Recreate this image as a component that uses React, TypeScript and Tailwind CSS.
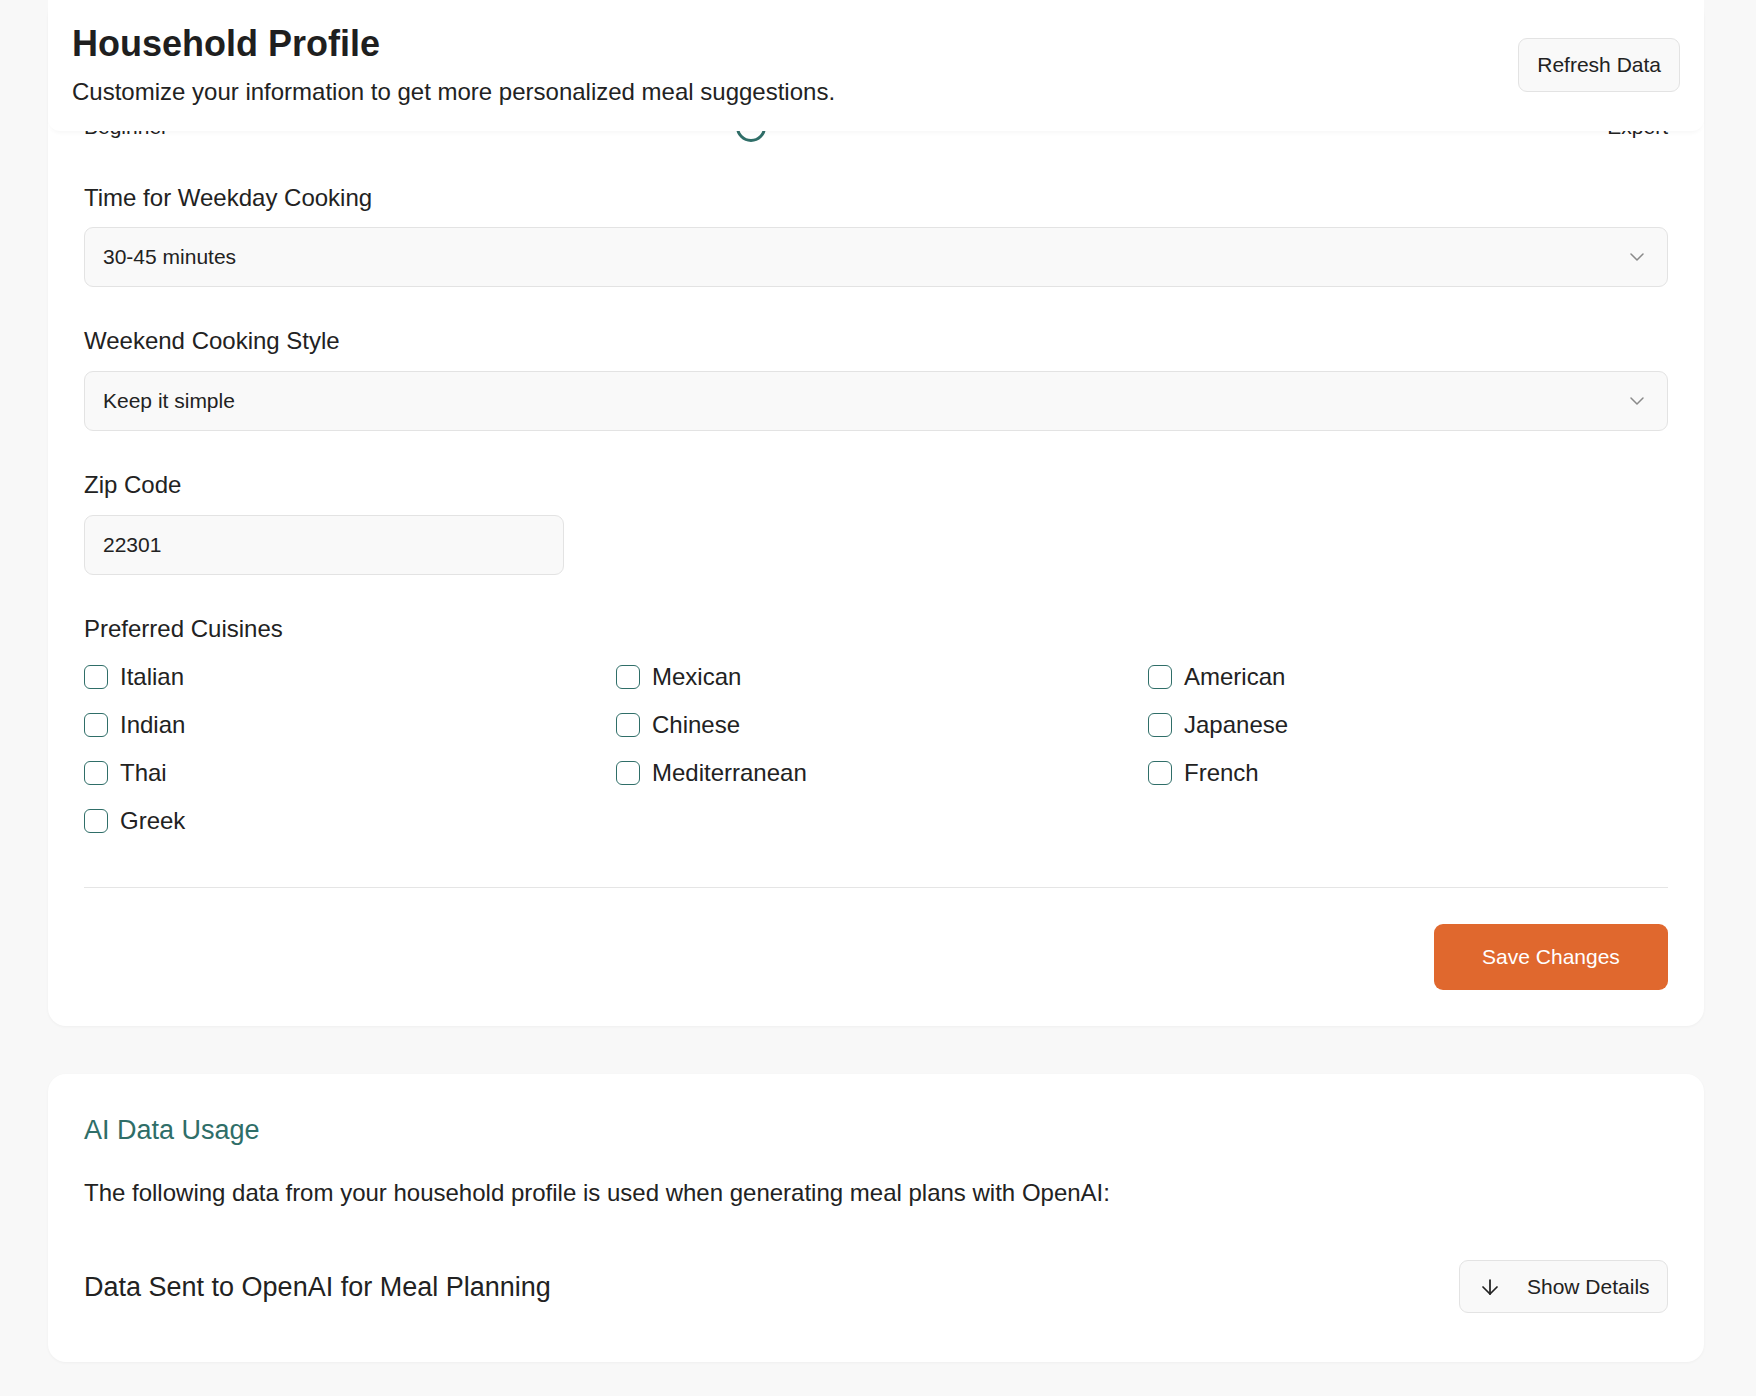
import React from "react";
import { ChevronDown, ArrowDown } from "lucide-react";

const cuisines = [
  "Italian",
  "Mexican",
  "American",
  "Indian",
  "Chinese",
  "Japanese",
  "Thai",
  "Mediterranean",
  "French",
  "Greek",
];

function Select({ value }: { value: string }) {
  return (
    <div className="flex h-[60px] w-full items-center justify-between rounded-[9px] border border-[#e3e3e3] bg-[#f9f9f9] px-[18px]">
      <span className="text-[21px] leading-[32px] text-[#222]">{value}</span>
      <ChevronDown size={24} strokeWidth={1.5} className="text-[#8a8a8a]" />
    </div>
  );
}

function Label({ children }: { children: React.ReactNode }) {
  return <div className="text-[24px] leading-[36px] text-[#222]">{children}</div>;
}

export default function App() {
  return (
    <div className="relative min-h-[1396px] w-full bg-[#f8f8f8] font-['Liberation_Sans',Arial,sans-serif] text-[#222]">
      {/* Sticky header overlay */}
      <div className="absolute left-[48px] top-0 z-10 flex h-[131px] w-[1656px] items-start justify-between rounded-b-[12px] bg-white px-[24px] pt-[24px] shadow-[0_4px_4px_-2px_rgba(0,0,0,0.035)]">
        <div>
          <h1 className="text-[36px] font-bold leading-[40px] text-[#1f1f1f]">Household Profile</h1>
          <p className="mt-[10px] text-[24px] leading-[36px] text-[#222]">
            Customize your information to get more personalized meal suggestions.
          </p>
        </div>
        <button className="mt-[14px] flex h-[54px] items-center rounded-[9px] border border-[#e3e3e3] bg-[#f9f9f9] px-[18px] text-[21px] text-[#222]">
          Refresh Data
        </button>
      </div>

      <div className="ml-[48px] w-[1656px] pb-[34px]">
        {/* Main profile card */}
        <div className="rounded-[18px] bg-white px-[36px] pb-[36px] pt-[112px] shadow-[0_1px_3px_rgba(0,0,0,0.04)]">
          {/* Skill slider row (mostly hidden below header) */}
          <div className="flex h-[30px] items-center gap-[24px]">
            <span className="text-[21px] leading-[30px] text-[#222]">Beginner</span>
            <div className="relative h-[6px] flex-1">
              <div
                className="absolute top-1/2 h-[30px] w-[30px] -translate-y-1/2 rounded-full border-[3px] border-[#2f6e68] bg-white"
                style={{ left: "calc(40.2% - 15px)" }}
              />
            </div>
            <span className="text-[21px] leading-[30px] text-[#222]">Expert</span>
          </div>

          <div className="mt-[38px]">
            <Label>Time for Weekday Cooking</Label>
            <div className="mt-[11px]">
              <Select value="30-45 minutes" />
            </div>
          </div>

          <div className="mt-[36px]">
            <Label>Weekend Cooking Style</Label>
            <div className="mt-[12px]">
              <Select value="Keep it simple" />
            </div>
          </div>

          <div className="mt-[36px]">
            <Label>Zip Code</Label>
            <div className="mt-[12px] flex h-[60px] w-[480px] items-center rounded-[9px] border border-[#e3e3e3] bg-[#f9f9f9] px-[18px]">
              <span className="text-[21px] text-[#222]">22301</span>
            </div>
          </div>

          <div className="mt-[36px]">
            <Label>Preferred Cuisines</Label>
            <div className="mt-[12px] grid grid-cols-3 gap-x-[12px] gap-y-[12px]">
              {cuisines.map((c) => (
                <label key={c} className="flex h-[36px] items-center gap-[12px]">
                  <span className="h-[24px] w-[24px] rounded-[6px] border-[1.5px] border-[#2f6e68] bg-white" />
                  <span className="text-[24px] leading-[36px] text-[#222]">{c}</span>
                </label>
              ))}
            </div>
          </div>

          <div className="mt-[48px] h-px bg-[#e5e5e5]" />

          <div className="mt-[36px] flex justify-end">
            <button className="flex h-[66px] w-[234px] items-center justify-center rounded-[9px] bg-[#e0682e] text-[21px] text-white">
              Save Changes
            </button>
          </div>
        </div>

        {/* AI data usage card */}
        <div className="mt-[48px] rounded-[18px] bg-white px-[36px] pb-[49px] pt-[36px] shadow-[0_1px_3px_rgba(0,0,0,0.04)]">
          <h2 className="text-[27px] leading-[40px] text-[#2f6e68]">AI Data Usage</h2>
          <p className="mt-[25px] text-[24px] leading-[36px] text-[#222]">
            The following data from your household profile is used when generating meal plans with OpenAI:
          </p>
          <div className="mt-[49px] flex items-center justify-between">
            <span className="text-[27px] leading-[40px] text-[#222]">Data Sent to OpenAI for Meal Planning</span>
            <button className="flex h-[53px] w-[209px] items-center rounded-[9px] border border-[#e3e3e3] bg-[#f9f9f9] pl-[18px] text-[21px] text-[#222]">
              <ArrowDown size={24} strokeWidth={1.75} className="text-[#222]" />
              <span className="ml-[25px]">Show Details</span>
            </button>
          </div>
        </div>
      </div>
    </div>
  );
}
